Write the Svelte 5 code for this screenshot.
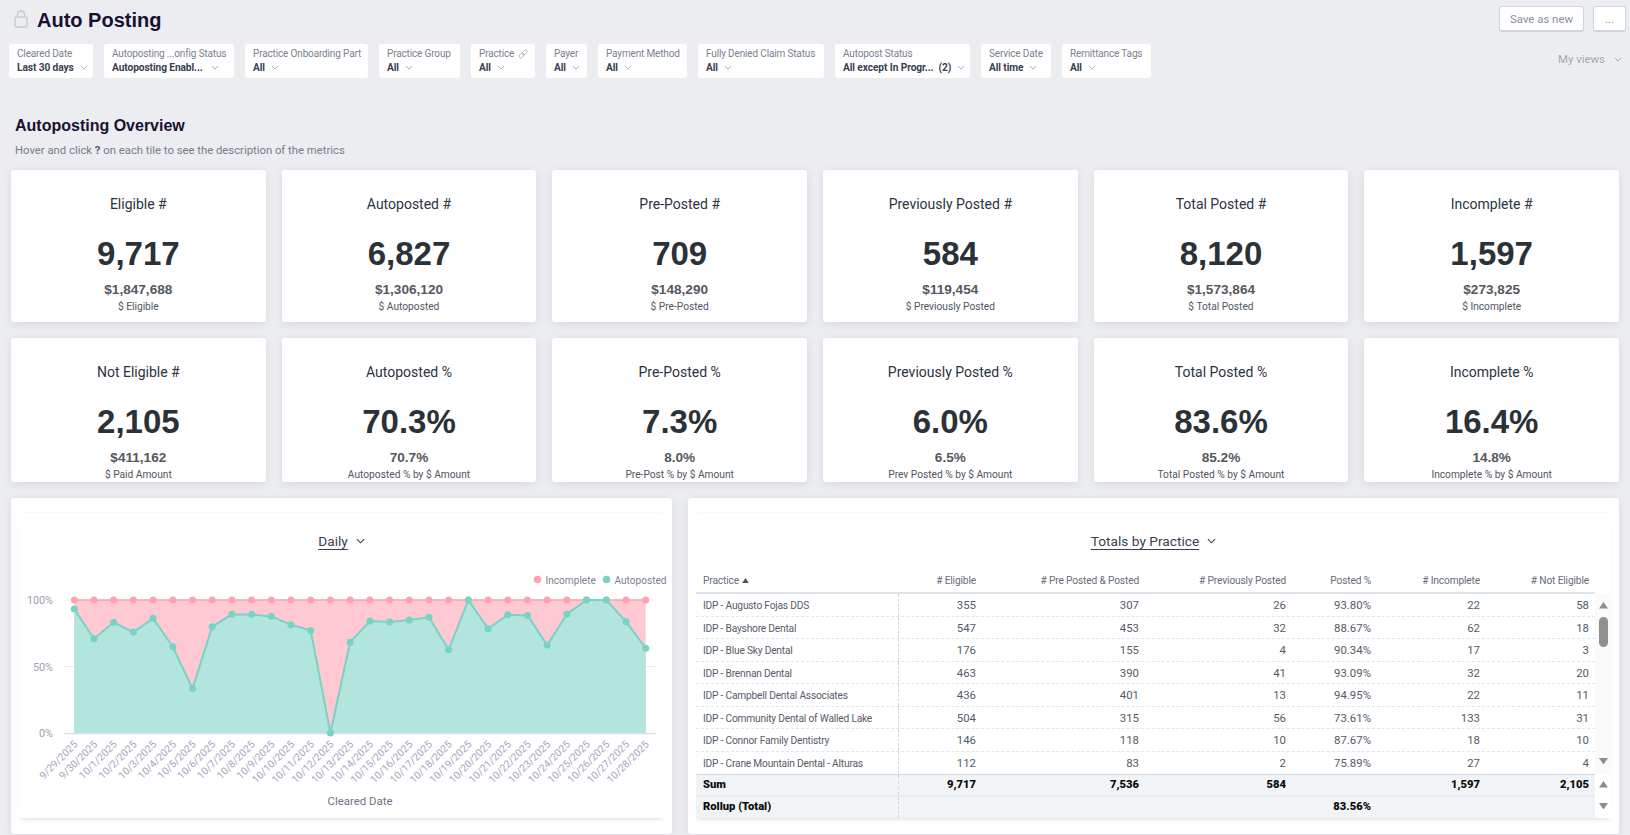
<script>
  const filters = [
    { label: 'Cleared Date', value: 'Last 30 days', w: 84 },
    { label: 'Autoposting ...onfig Status', value: 'Autoposting Enabl...', w: 130, gap: 8 },
    { label: 'Practice Onboarding Part', value: 'All', w: 123 },
    { label: 'Practice Group', value: 'All', w: 81 },
    { label: 'Practice', value: 'All', w: 64, link: true },
    { label: 'Payer', value: 'All', w: 41 },
    { label: 'Payment Method', value: 'All', w: 89 },
    { label: 'Fully Denied Claim Status', value: 'All', w: 126 },
    { label: 'Autopost Status', value: 'All except In Progr...', extra: '(2)', w: 135 },
    { label: 'Service Date', value: 'All time', w: 70 },
    { label: 'Remittance Tags', value: 'All', w: 89 }
  ];
  const cards = [
    ['Eligible #', '9,717', '$1,847,688', '$ Eligible'],
    ['Autoposted #', '6,827', '$1,306,120', '$ Autoposted'],
    ['Pre-Posted #', '709', '$148,290', '$ Pre-Posted'],
    ['Previously Posted #', '584', '$119,454', '$ Previously Posted'],
    ['Total Posted #', '8,120', '$1,573,864', '$ Total Posted'],
    ['Incomplete #', '1,597', '$273,825', '$ Incomplete'],
    ['Not Eligible #', '2,105', '$411,162', '$ Paid Amount'],
    ['Autoposted %', '70.3%', '70.7%', 'Autoposted % by $ Amount'],
    ['Pre-Posted %', '7.3%', '8.0%', 'Pre-Post % by $ Amount'],
    ['Previously Posted %', '6.0%', '6.5%', 'Prev Posted % by $ Amount'],
    ['Total Posted %', '83.6%', '85.2%', 'Total Posted % by $ Amount'],
    ['Incomplete %', '16.4%', '14.8%', 'Incomplete % by $ Amount']
  ];
  const pct = [93.2, 70.9, 83.2, 75.9, 86.2, 64.8, 33.4, 79.9, 89.2, 89.2, 87.7, 81.4, 77.1, 0, 68.3, 84.2, 83.4, 84.9, 87, 62.6, 100, 78.4, 88.9, 88.4, 66.1, 89.4, 100, 100, 83.7, 63.8];
  const x0 = 74.3, step = (645.7 - 74.3) / 29, yTop = 600, yBot = 733;
  const pts = pct.map((p, i) => {
    const d = i < 2 ? `9/${29 + i}/2025` : `10/${i - 1}/2025`;
    return { x: x0 + step * i, y: yBot - (p / 100) * (yBot - yTop), d };
  });
  const line = pts.map((p) => `${p.x.toFixed(1)},${p.y.toFixed(1)}`).join(' ');
  const area = `${x0},${yBot} ${line} ${pts[29].x},${yBot}`;
  const pink = `${x0},${yTop} ${pts[29].x},${yTop} ${pts[29].x},${yBot} ${x0},${yBot}`;
  const headers = ['# Eligible', '# Pre Posted & Posted', '# Previously Posted', 'Posted %', '# Incomplete', '# Not Eligible'];
  const rows = [
    ['IDP - Augusto Fojas DDS', '355', '307', '26', '93.80%', '22', '58'],
    ['IDP - Bayshore Dental', '547', '453', '32', '88.67%', '62', '18'],
    ['IDP - Blue Sky Dental', '176', '155', '4', '90.34%', '17', '3'],
    ['IDP - Brennan Dental', '463', '390', '41', '93.09%', '32', '20'],
    ['IDP - Campbell Dental Associates', '436', '401', '13', '94.95%', '22', '11'],
    ['IDP - Community Dental of Walled Lake', '504', '315', '56', '73.61%', '133', '31'],
    ['IDP - Connor Family Dentistry', '146', '118', '10', '87.67%', '18', '10'],
    ['IDP - Crane Mountain Dental - Alturas', '112', '83', '2', '75.89%', '27', '4']
  ];
  const sum = ['Sum', '9,717', '7,536', '584', '', '1,597', '2,105'];
  const rollup = ['Rollup (Total)', '', '', '', '83.56%', '', ''];
</script>

{#snippet chevron(cls)}
  <svg class={cls} viewBox="0 0 10 6" aria-hidden="true"><path d="M1 1l4 4 4-4" fill="none" stroke="currentColor" stroke-width="1.2" /></svg>
{/snippet}

{#snippet arrow(dir)}
  <svg class="sb-arrow" viewBox="0 0 10 7" aria-hidden="true"><path d={dir === 'up' ? 'M5 0l5 7H0z' : 'M0 0h10L5 7z'} fill="#8c8c8c" /></svg>
{/snippet}

<div class="page">
  <header class="top">
    <div class="title-wrap">
      <svg class="lock" viewBox="0 0 14 18" aria-hidden="true">
        <rect x="1" y="7" width="12" height="10" rx="1.5" fill="none" stroke="#c6cad3" stroke-width="1.4" />
        <path d="M3.5 7V4.2a3.5 3.5 0 017 0V7" fill="none" stroke="#c6cad3" stroke-width="1.4" />
      </svg>
      <h1>Auto Posting</h1>
    </div>
    <div class="actions">
      <button class="btn save">Save as new</button>
      <button class="btn more">...</button>
    </div>
  </header>

  <div class="filter-row">
    <div class="filters">
      {#each filters as f}
        <div class="filter" style:width="{f.w}px">
          <div class="f-label">
            <span>{f.label}</span>
            {#if f.link}
              <svg class="link" viewBox="0 0 12 12" aria-hidden="true">
                <g fill="none" stroke="#a9aeb9" stroke-width="1" transform="rotate(-45 6 6)">
                  <rect x="0" y="4" width="7" height="4" rx="2" />
                  <rect x="5" y="4" width="7" height="4" rx="2" />
                </g>
              </svg>
            {/if}
          </div>
          <div class="f-value" class:wide={f.gap}>
            <span>{f.value}</span>
            {#if f.extra}<span class="extra">{f.extra}</span>{/if}
            {@render chevron('chev')}
          </div>
        </div>
      {/each}
    </div>
    <div class="views">
      <span>My views</span>
      {@render chevron('chev views-chev')}
    </div>
  </div>

  <h2>Autoposting Overview</h2>
  <p class="hint">Hover and click <b>?</b> on each tile to see the description of the metrics</p>

  <section class="cards">
    {#each cards as c}
      <article class="card">
        <div class="c-title">{c[0]}</div>
        <div class="c-value">{c[1]}</div>
        <div class="c-amount">{c[2]}</div>
        <div class="c-sub">{c[3]}</div>
      </article>
    {/each}
  </section>

  <section class="panels">
    <div class="panel">
      <div class="frame">
        <div class="p-title"><span class="u">Daily</span>{@render chevron('p-chev')}</div>
        <svg class="chart" viewBox="18 561 646 257" role="img" aria-label="Daily chart">
          <line x1="64" x2="656" y1="600" y2="600" stroke="#eceef2" />
          <line x1="64" x2="656" y1="666.5" y2="666.5" stroke="#eceef2" />
          <polygon points={pink} fill="#fec6d1" fill-opacity="0.95" />
          <polygon points={area} fill="#b0e5de" fill-opacity="0.97" />
          <line x1="64" x2="656" y1="733.5" y2="733.5" stroke="#dcdfe8" stroke-width="1.5" />
          <line x1={x0} x2={pts[29].x} y1={yTop} y2={yTop} stroke="#fd9fb0" stroke-width="1.5" />
          {#each pts as p}
            <circle cx={p.x} cy={yTop} r="3.5" fill="#fea2b3" />
          {/each}
          <polyline points={line} fill="none" stroke="#79d3c3" stroke-width="2" stroke-linejoin="round" />
          {#each pts as p}
            <circle cx={p.x} cy={p.y} r="3.5" fill="#79d3c3" />
            <text class="xl" x={p.x + 4} y="745" text-anchor="end" transform="rotate(-45 {p.x + 4} 745)">{p.d}</text>
          {/each}
          <text class="yl" x="53" y="604" text-anchor="end">100%</text>
          <text class="yl" x="53" y="670.5" text-anchor="end">50%</text>
          <text class="yl" x="53" y="737" text-anchor="end">0%</text>
          <circle cx="537.5" cy="579.5" r="3.8" fill="#fea2b3" />
          <text class="lg" x="545.5" y="583.5">Incomplete</text>
          <circle cx="606.5" cy="579.5" r="3.8" fill="#79d3c3" />
          <text class="lg" x="614.5" y="583.5">Autoposted</text>
          <text class="axis" x="360" y="805" text-anchor="middle">Cleared Date</text>
        </svg>
      </div>
    </div>

    <div class="panel">
      <div class="frame tframe">
        <div class="p-title"><span class="u">Totals by Practice</span>{@render chevron('p-chev')}</div>
        <div class="table">
          <div class="row head">
            <div class="cell left">Practice
              <svg class="sort" viewBox="0 0 8 6" aria-hidden="true"><path d="M4 0l4 6H0z" fill="#4a5160" /></svg>
            </div>
            {#each headers as h}<div class="cell">{h}</div>{/each}
          </div>
          <div class="body-wrap">
            <div class="rows">
              {#each rows as r}
                <div class="row data">
                  {#each r as v, i}<div class="cell" class:left={i === 0}>{v}</div>{/each}
                </div>
              {/each}
            </div>
            <div class="sbar">
              {@render arrow('up')}
              <div class="thumb"></div>
              <div class="sb-space"></div>
              {@render arrow('down')}
            </div>
          </div>
          <div class="body-wrap">
            <div class="rows">
              <div class="row total first">
                {#each sum as v, i}<div class="cell" class:left={i === 0}>{v}</div>{/each}
              </div>
              <div class="row total">
                {#each rollup as v, i}<div class="cell" class:left={i === 0}>{v}</div>{/each}
              </div>
            </div>
            <div class="sbar foot">
              {@render arrow('up')}
              {@render arrow('down')}
            </div>
          </div>
        </div>
      </div>
    </div>
  </section>
</div>

<style>
  :global(body) {
    margin: 0;
    background: #ecedf0;
    overflow: hidden;
  }
  .page {
    height: 835px;
    overflow: hidden;
    box-sizing: border-box;
    padding: 6px 4px 0 9px;
    font-family: Roboto, "Noto Sans", sans-serif;
    color: #333a47;
  }
  .top {
    display: flex;
    justify-content: space-between;
    align-items: flex-start;
    height: 26px;
  }
  .title-wrap {
    display: flex;
    align-items: center;
    gap: 9px;
    padding-left: 5px;
    height: 28px;
  }
  .lock { width: 14px; height: 18px; margin-top: -2px; }
  h1 {
    margin: -1px 0 0;
    font: 700 20px/26px "Liberation Sans", Arial, sans-serif;
    color: #1a1033;
  }
  .actions { display: flex; gap: 9px; }
  .btn {
    height: 26px;
    box-sizing: border-box;
    border: 1px solid #cdd5e0;
    border-bottom-width: 2px;
    border-radius: 3px;
    background: #fff;
    color: #8a909c;
    font: 400 11.4px Roboto, sans-serif;
    padding: 0;
  }
  .save { width: 85px; }
  .more { width: 33px; }

  .filter-row {
    display: flex;
    justify-content: space-between;
    margin-top: 12px;
  }
  .filters { display: flex; gap: 11px; }
  .filter {
    height: 34px;
    box-sizing: border-box;
    padding: 3px 0 0 8px;
    background: #fff;
    border-radius: 3px;
    white-space: nowrap;
    overflow: hidden;
  }
  .f-label {
    display: flex;
    align-items: center;
    gap: 4px;
    font-size: 10px;
    letter-spacing: -0.15px;
    line-height: 14px;
    color: #7a8190;
  }
  .link { width: 10px; height: 10px; }
  .f-value {
    display: flex;
    align-items: center;
    gap: 6px;
    font-size: 10.2px;
    letter-spacing: -0.1px;
    font-weight: 700;
    line-height: 14px;
    color: #3a4052;
  }
  .f-value.wide { gap: 8px; }
  .extra { margin-left: -1px; }
  .chev { width: 8px; height: 5px; color: #a4a9b4; flex: none; margin-top: -2px; }
  .views {
    display: flex;
    align-items: center;
    gap: 9px;
    height: 30px;
    margin: 0 4px 0 0;
    font-size: 11.4px;
    color: #a2a7b2;
  }
  .views-chev { margin-top: 0; }

  h2 {
    margin: 38px 0 0 6px;
    font: 700 16px/20px "Liberation Sans", Arial, sans-serif;
    color: #1a1033;
  }
  .hint {
    margin: 7px 0 0 6px;
    font-size: 11.3px;
    line-height: 16px;
    color: #767c8a;
  }
  .hint b { color: #5a606c; }

  .cards {
    display: grid;
    grid-template-columns: repeat(6, 1fr);
    grid-template-rows: 152px 144px;
    gap: 16px;
    margin: 11px 7px 0 2px;
  }
  .card {
    background: #fff;
    border-radius: 3px;
    box-shadow: 0 2px 8px rgba(120, 125, 150, 0.18);
    text-align: center;
    padding-top: 24px;
    overflow: hidden;
    white-space: nowrap;
  }
  .c-title { font-size: 14px; line-height: 20px; color: #2c3340; }
  .c-value {
    margin-top: 20px;
    font: 700 33px/40px "Liberation Sans", Arial, sans-serif;
    color: #2a3238;
  }
  .c-amount {
    margin-top: 8px;
    font: 700 13.6px/16px "Liberation Sans", Arial, sans-serif;
    color: #55585f;
  }
  .c-sub { margin-top: 1px; font-size: 10.2px; line-height: 16px; color: #4e5563; }

  .panels {
    display: grid;
    grid-template-columns: 661px 931px;
    gap: 16px;
    margin: 16px 0 0 2px;
  }
  .panel {
    height: 336px;
    box-sizing: border-box;
    padding: 15px 7px 0;
    background: #fff;
    border-radius: 3px;
    box-shadow: 0 2px 8px rgba(120, 125, 150, 0.18);
  }
  .frame {
    height: 305px;
    box-shadow: 0 4px 4px -3px rgba(120, 125, 150, 0.28), 0 -2px 3px -2px rgba(120, 125, 150, 0.12);
    border-radius: 3px;
  }
  .p-title {
    height: 48px;
    box-sizing: border-box;
    padding-top: 18px;
    display: flex;
    justify-content: center;
    align-items: flex-start;
    gap: 8px;
    font-size: 13.7px;
    line-height: 20px;
    color: #3a4050;
  }
  .u { text-decoration: underline; text-underline-offset: 3px; }
  .p-chev { width: 9px; height: 6px; color: #3a4050; margin-top: 7px; }
  .chart { display: block; width: 646px; height: 257px; overflow: visible; }
  .xl { font-size: 10.3px; fill: #a4a8bd; font-family: Roboto, sans-serif; }
  .yl { font-size: 10.8px; fill: #9a9fb2; font-family: Roboto, sans-serif; }
  .lg { font-size: 10.1px; fill: #7c8292; font-family: Roboto, sans-serif; }
  .axis { font-size: 11.4px; fill: #6e7480; font-family: Roboto, sans-serif; }

  .table { margin: 0 1px; }
  .row {
    display: grid;
    grid-template-columns: 203px 83px 163px 147px 85px 109px 109px;
    width: 899px;
    box-sizing: border-box;
  }
  .cell {
    text-align: right;
    padding-right: 6px;
    padding-left: 7px;
    font-size: 11.4px;
    white-space: nowrap;
    overflow: hidden;
    color: #555b68;
    box-sizing: border-box;
  }
  .cell.left {
    text-align: left;
    font-size: 10.2px;
    letter-spacing: -0.2px;
    border-right: 1px dashed #cfdae0;
  }
  .head {
    height: 33px;
    padding-top: 9px;
    align-items: center;
    border-bottom: 2px solid #dfe2e8;
  }
  .head .cell {
    color: #666c7a;
    line-height: 22px;
    font-size: 10.2px;
    letter-spacing: -0.15px;
  }
  .head .cell.left { border-right: 0; }
  .sort { width: 7px; height: 5px; margin: 0 0 1px 1px; }
  .body-wrap { display: flex; width: 915px; }
  .rows { width: 899px; }
  .data {
    height: 22.5px;
    border-bottom: 1px dashed #e2e6ea;
  }
  .data:last-child { border-bottom: 0; }
  .data .cell { line-height: 22px; }
  .data .cell.left { line-height: 24px; }
  .total {
    height: 21px;
    background: #f1f4f6;
  }
  .total.first {
    height: 23px;
    border-top: 1px solid #d3dae0;
    border-bottom: 2px solid #e7eaee;
  }
  .total .cell {
    color: #0c0c0c;
    font-size: 11.2px;
    letter-spacing: 0;
    font-weight: 900;
    line-height: 20px;
    background: #f1f4f6;
  }
  .sbar {
    width: 16px;
    height: 180px;
    display: flex;
    flex-direction: column;
    align-items: center;
    padding-top: 8px;
    box-sizing: border-box;
    background: #fafafa;
  }
  .sbar.foot {
    height: 44px;
    background: #fff;
    padding-top: 7px;
    gap: 15px;
  }
  .sb-arrow { width: 9px; height: 6.5px; flex: none; }
  .thumb {
    width: 9px;
    height: 30px;
    margin-top: 8px;
    border-radius: 5px;
    background: #8f8f8f;
  }
  .sb-space { flex: 1; }
  .sbar:not(.foot) .sb-arrow:last-child { margin-bottom: 10px; }
</style>
